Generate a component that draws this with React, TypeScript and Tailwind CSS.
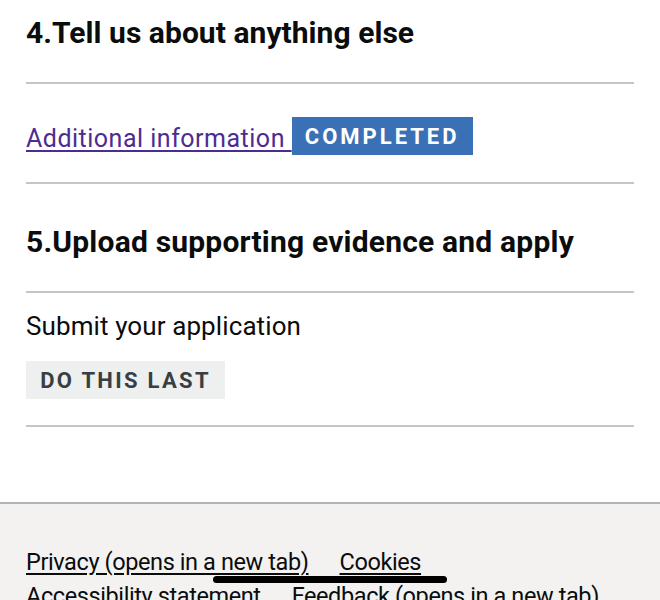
import React from 'react';

const Divider = () => <hr className="border-0 border-t-2 border-[#c4c5c6] m-0" />;

const App = () => {
  return (
    <div className="relative w-[660px] h-[600px] overflow-hidden bg-white text-[#0b0c0c] font-['Roboto','Liberation_Sans',sans-serif]">
      <main className="px-[26px]">
        <h2 className="pt-[14px] pb-[30px] text-[30px] leading-[38px] font-bold tracking-[0.05px]">
          4.Tell us about anything else
        </h2>
        <Divider />
        <div className="flex items-end pt-[33px] pb-[27px]">
          <a href="#" className="whitespace-pre text-[25px] leading-[32px] text-[#4c2c92] underline underline-offset-[3px] decoration-[1.5px] tracking-[0.5px]">
            {'Additional information '}
          </a>
          <strong className="flex h-[38px] w-[181px] items-center justify-center bg-[#3a70b5] text-white text-[22px] font-bold tracking-[3px]">
            COMPLETED
          </strong>
        </div>
        <Divider />
        <h2 className="pt-[39px] pb-[30px] text-[30px] leading-[38px] font-bold tracking-[0.2px]">
          5.Upload supporting evidence and apply
        </h2>
        <Divider />
        <div className="pt-[16px] pb-[26px]">
          <p className="text-[26px] leading-[34px] tracking-[0.1px]">Submit your application</p>
          <strong className="mt-[18px] inline-flex items-center justify-center h-[38px] w-[199px] bg-[#eeefef] text-[#383f43] text-[22px] font-bold tracking-[2.3px]">
            DO THIS LAST
          </strong>
        </div>
        <Divider />
      </main>
      <footer className="mt-[75px] border-t-2 border-[#b1b4b6] bg-[#f3f2f1] px-[26px] pt-[41px] pb-[20px]">
        <ul className="flex flex-wrap gap-x-[31px] text-[23.5px] leading-[34px] tracking-[-0.4px]">
          <li><a href="#" className="underline underline-offset-[3px] text-[#0b0c0c]">Privacy (opens in a new tab)</a></li>
          <li><a href="#" className="underline underline-offset-[3px] text-[#0b0c0c]">Cookies</a></li>
          <li><a href="#" className="underline underline-offset-[3px] text-[#0b0c0c]">Accessibility statement</a></li>
          <li><a href="#" className="underline underline-offset-[3px] text-[#0b0c0c]">Feedback (opens in a new tab)</a></li>
        </ul>
      </footer>
      {/* home indicator */}
      <div className="absolute left-[213px] top-[576px] w-[234px] h-[7px] rounded-full bg-black" />
    </div>
  );
};

export default App;
